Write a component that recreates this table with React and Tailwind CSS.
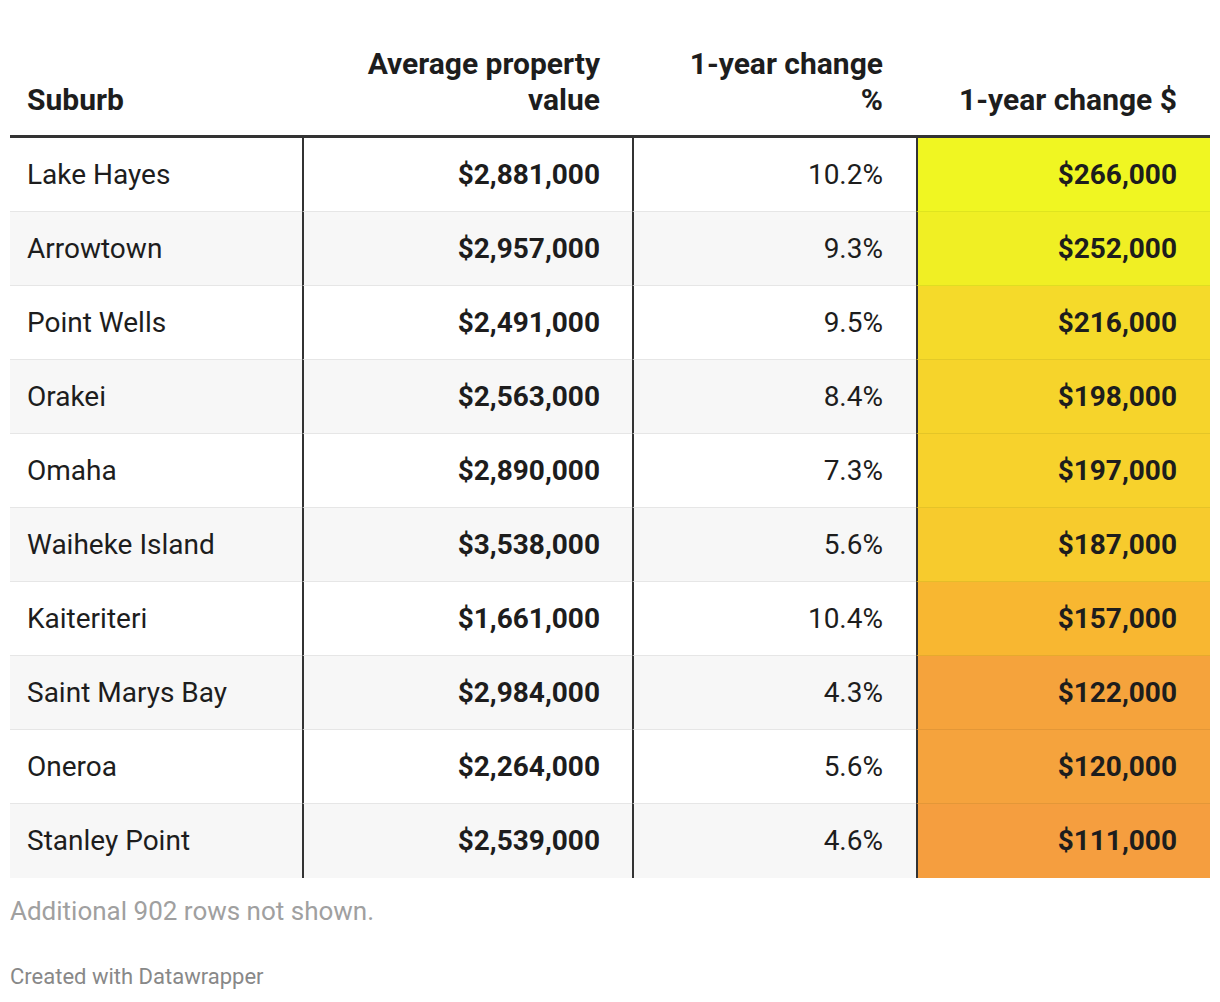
import React from 'react';

// Filas de la tabla
const rows = [
  { suburb: 'Lake Hayes', value: '$2,881,000', pct: '10.2%', change: '$266,000', color: '#f0f622' },
  { suburb: 'Arrowtown', value: '$2,957,000', pct: '9.3%', change: '$252,000', color: '#f0ef24' },
  { suburb: 'Point Wells', value: '$2,491,000', pct: '9.5%', change: '$216,000', color: '#f5da2a' },
  { suburb: 'Orakei', value: '$2,563,000', pct: '8.4%', change: '$198,000', color: '#f6d42b' },
  { suburb: 'Omaha', value: '$2,890,000', pct: '7.3%', change: '$197,000', color: '#f7d22c' },
  { suburb: 'Waiheke Island', value: '$3,538,000', pct: '5.6%', change: '$187,000', color: '#f7cb2d' },
  { suburb: 'Kaiteriteri', value: '$1,661,000', pct: '10.4%', change: '$157,000', color: '#f8b731' },
  { suburb: 'Saint Marys Bay', value: '$2,984,000', pct: '4.3%', change: '$122,000', color: '#f5a33c' },
  { suburb: 'Oneroa', value: '$2,264,000', pct: '5.6%', change: '$120,000', color: '#f5a33d' },
  { suburb: 'Stanley Point', value: '$2,539,000', pct: '4.6%', change: '$111,000', color: '#f59e3f' },
];

const App = () => {
  return (
    <div
      className="min-h-screen bg-white px-[10px] pt-[46px] text-[#1d1d1d]"
      style={{ fontFamily: 'Roboto, "Liberation Sans", sans-serif' }}
    >
      {/* Encabezado */}
      <div className="flex items-end border-b-[3px] border-[#333] pb-[17px] text-[30px] font-bold leading-[36px]">
        <div className="w-[292px] pl-[17px]">Suburb</div>
        <div className="w-[330px] pr-[32px] text-right">
          Average property
          <br />
          value
        </div>
        <div className="w-[284px] pr-[33px] text-right">
          1-year change
          <br />%
        </div>
        <div className="w-[294px] pr-[33px] text-right">1-year change $</div>
      </div>

      {/* Cuerpo */}
      <div>
        {rows.map((r, i) => (
          <div
            key={r.suburb}
            className={`flex h-[74px] text-[28px] ${i % 2 === 1 ? 'bg-[#f7f7f7]' : 'bg-white'}`}
          >
            <div
              className={`flex w-[292px] items-center pl-[17px] ${i < rows.length - 1 ? 'border-b border-[#e6e6e6]' : ''}`}
            >
              {r.suburb}
            </div>
            <div
              className={`flex w-[330px] items-center justify-end border-l-2 border-l-[#333] pr-[32px] font-bold ${i < rows.length - 1 ? 'border-b border-b-[#e6e6e6]' : ''}`}
            >
              {r.value}
            </div>
            <div
              className={`flex w-[284px] items-center justify-end border-l-2 border-l-[#333] pr-[33px] ${i < rows.length - 1 ? 'border-b border-b-[#e6e6e6]' : ''}`}
            >
              {r.pct}
            </div>
            <div
              className={`flex w-[294px] items-center justify-end border-l-2 border-l-[#333] pr-[33px] font-bold ${i < rows.length - 1 ? 'border-b border-b-black/[0.07]' : ''}`}
              style={{ backgroundColor: r.color }}
            >
              {r.change}
            </div>
          </div>
        ))}
      </div>

      <p className="mt-[18px] text-[26px] leading-[30px] text-[#a0a0a0]">Additional 902 rows not shown.</p>
      <p className="mt-[38px] text-[22px] leading-[26px] text-[#888]">Created with Datawrapper</p>
    </div>
  );
};

export default App;
